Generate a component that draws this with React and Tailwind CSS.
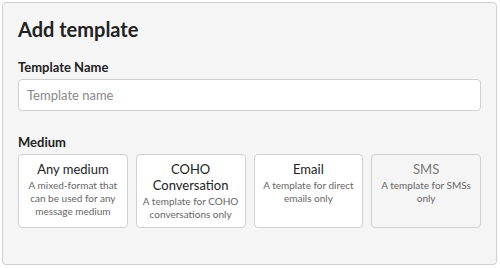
const MEDIUMS = [
  { title: "Any medium", desc: "A mixed-format that can be used for any message medium" },
  { title: "COHO Conversation", desc: "A template for COHO conversations only" },
  { title: "Email", desc: "A template for direct emails only" },
  { title: "SMS", desc: "A template for SMSs only", disabled: true },
];

export default function App() {
  return (
    <div className="h-[268px] w-[500px] bg-white p-[2px] font-['Lato',sans-serif]">
      <div className="h-[263px] w-[495px] rounded-[4px] border border-[#cfcfcf] bg-[#f5f5f5] px-[15px] pt-[14px]">
        <h1 className="text-[20px] font-bold leading-[24px] text-[#222]">Add template</h1>

        <label className="mt-[18px] block text-[13px] font-bold leading-[16px] text-[#222]">
          Template Name
        </label>
        <input
          placeholder="Template name"
          className="mt-[4px] block h-[32px] w-[463px] rounded-[4px] border border-[#cfcfcf] bg-white px-[8px] text-[13px] text-[#333] placeholder:text-[#888] outline-none"
        />

        <div className="mt-[23px] text-[13px] font-bold leading-[16px] text-[#222]">Medium</div>
        <div className="mt-[4px] flex gap-[8px]">
          {MEDIUMS.map(({ title, desc, disabled }) => (
            <div
              key={title}
              className={`flex h-[74px] w-[110px] flex-col items-center rounded-[4px] border border-[#d0d0d0] px-[6px] pt-[6px] text-center ${
                disabled ? "bg-[#f5f5f5]" : "bg-white"
              }`}
            >
              <div className={`text-[13px] leading-[16px] ${disabled ? "text-[#777]" : "text-[#222]"}`}>{title}</div>
              <div className="mt-[2px] text-[10px] leading-[13px] text-[#666]">{desc}</div>
            </div>
          ))}
        </div>
      </div>
    </div>
  );
}
